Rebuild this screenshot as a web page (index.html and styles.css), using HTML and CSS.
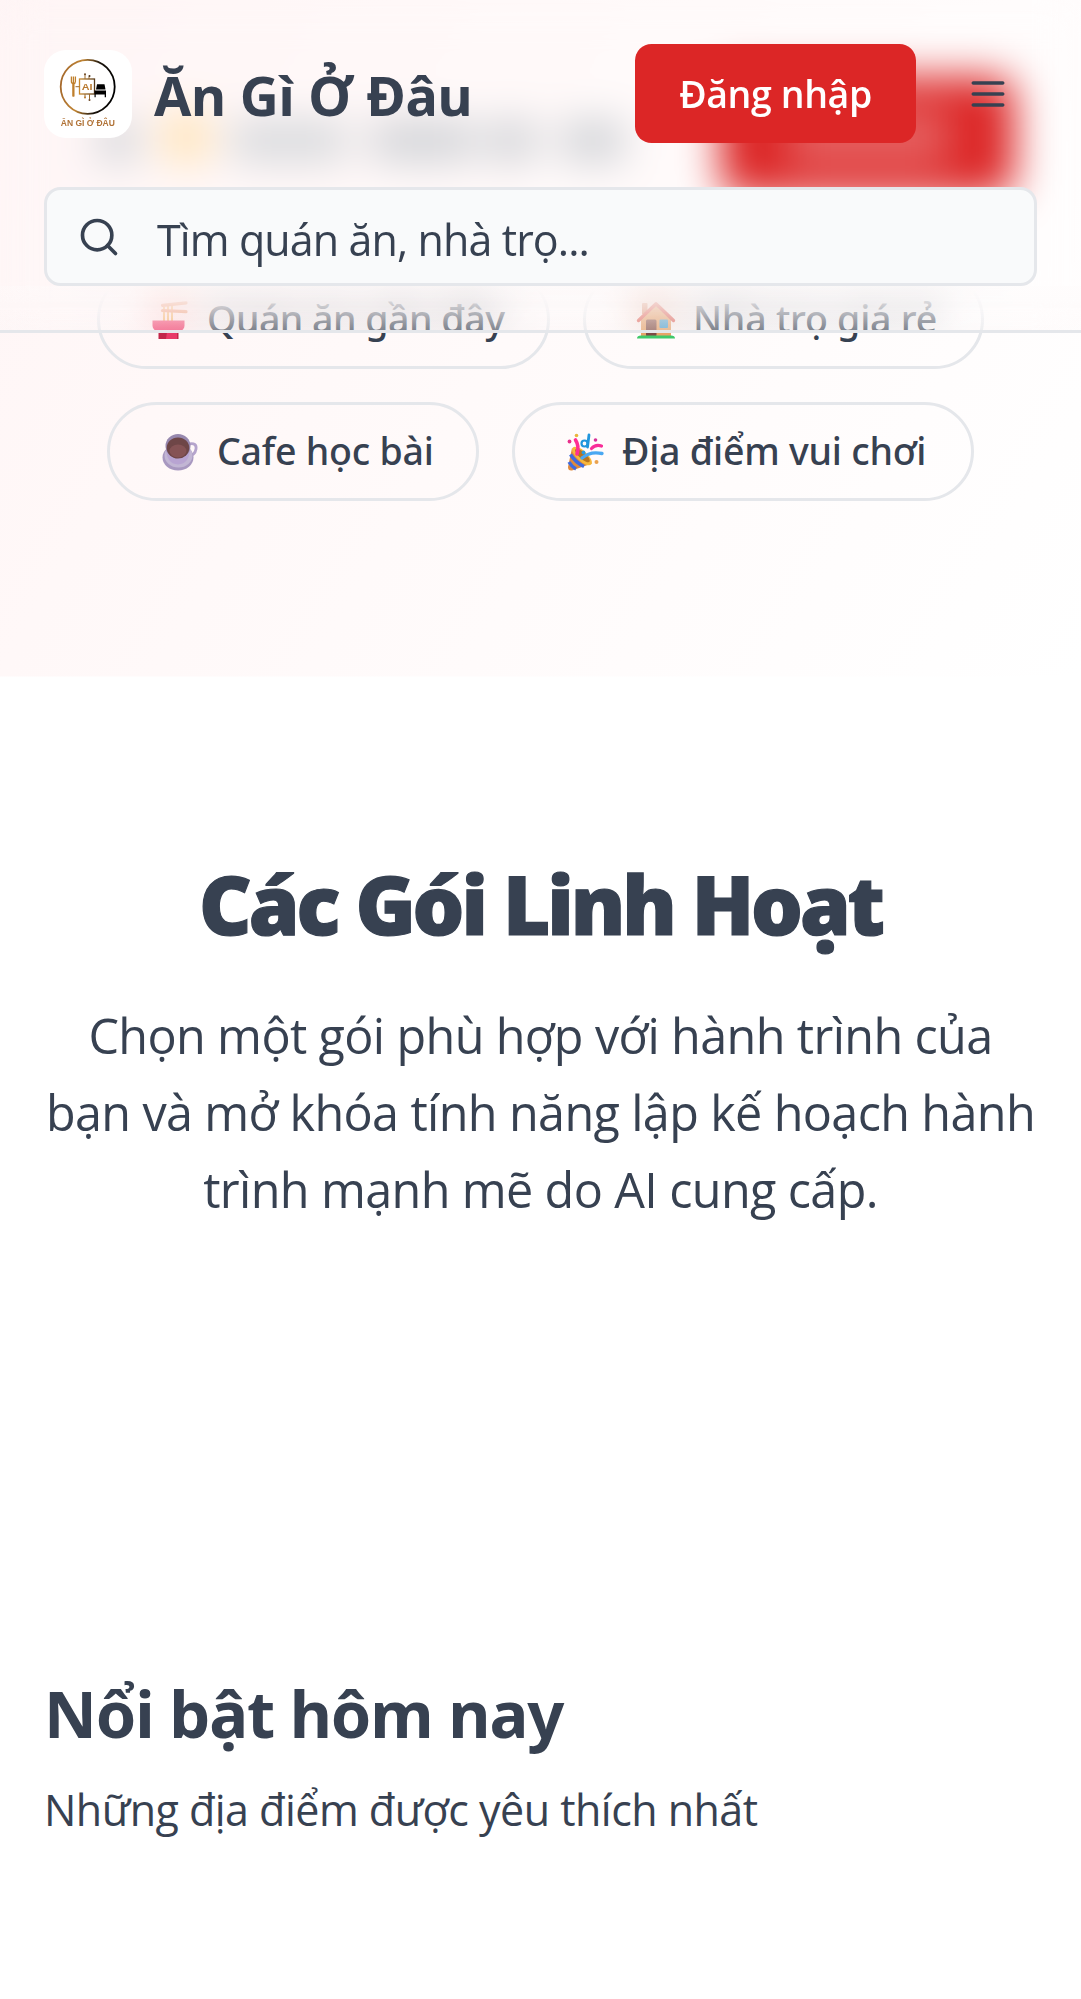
FILE: index.html
```html
<!DOCTYPE html>
<html lang="vi">
<head>
<meta charset="utf-8">
<title>Ăn Gì Ở Đâu</title>
<link rel="stylesheet" href="styles.css">
</head>
<body>
<header class="header">
  <div class="bar">
    <div class="logo">
      <svg viewBox="0 0 88 88" width="88" height="88">
        <defs>
          <linearGradient id="ring" x1="0" x2="1" y1="0.35" y2="0.5">
            <stop offset="0" stop-color="#a5692c"/><stop offset="0.35" stop-color="#c08433"/><stop offset="0.68" stop-color="#1a140c"/><stop offset="1" stop-color="#000"/>
          </linearGradient>
          <linearGradient id="chip" x1="0" x2="1"><stop offset="0" stop-color="#c98a2e"/><stop offset="1" stop-color="#5a3c1a"/></linearGradient>
        </defs>
        <circle cx="43.7" cy="36.8" r="27" fill="none" stroke="url(#ring)" stroke-width="1.8"/>
        <path d="M27.4 26.5v5q0 2 2 2.200q2-.2 2-2.200v-5M29.400 26.500v20" fill="none" stroke="#bf7f2c" stroke-width="1.300"/>
        <path d="M29.400 34v12.500" stroke="#bf7f2c" stroke-width="2.200"/>
        <rect x="35.500" y="29" width="15" height="15" fill="none" stroke="url(#chip)" stroke-width="1.300"/>
        <path d="M31.500 36.700h4M41 29v-4M45 29v-2.500M41 44v3M45.500 44v5" stroke="#9a6a30" stroke-width="1" fill="none"/>
        <circle cx="41" cy="24.300" r="1" fill="#6b4520"/><circle cx="45.500" cy="26" r="1" fill="#4a3018"/><circle cx="41" cy="47.500" r="1" fill="#b8782c"/><circle cx="45.500" cy="50" r="1" fill="#6b4520"/>
        <text x="37.800" y="40.100" class="logo-ai" textLength="10.800" lengthAdjust="spacingAndGlyphs">AI</text>
        <path d="M53 34.300h7.500l1 5.200h-9.500zM50.500 40.500h11.500v6.800h-1.300v-2.800h-9v2.800h-1.200z" fill="#000"/>
        <text x="16.800" y="76.300" class="logo-name" textLength="54" lengthAdjust="spacingAndGlyphs">ĂN GÌ Ở ĐÂU</text>
      </svg>
    </div>
    <span class="brand">Ăn Gì Ở Đâu</span>
    <button class="login">Đăng nhập</button>
    <button class="menu" aria-label="Menu">
      <svg viewBox="0 0 24 24" width="44" height="44" class="stroke-icon"><path d="M4 6h16M4 12h16M4 18h16"/></svg>
    </button>
  </div>
  <div class="search">
    <svg viewBox="0 0 24 24" width="44" height="44" class="stroke-icon"><circle cx="11" cy="11" r="8"/><path d="m21 21-4.350-4.350"/></svg>
    <span>Tìm quán ăn, nhà trọ...</span>
  </div>
</header>

<section class="hero">
  <div class="hero-search">
    <i class="word w1"></i><i class="word dish"></i><i class="word w2"></i><i class="word w3"></i><i class="word w4"></i><i class="word w5"></i>
    <div class="hero-btn"><i></i></div>
  </div>
  <div class="pills">
    <a class="pill p1">
      <svg viewBox="0 0 38 38" width="38" height="38">
        <path d="M13 6v18M17 5v18M21 5v16" stroke="#f0b040" stroke-width="1.700"/>
        <path d="M11.500 4.300 35 1.800M11.500 9.500l23.500 1.200" stroke="#e8905c" stroke-width="3.200" stroke-linecap="round"/>
        <path d="M1.500 19.500h32v5q0 4-5.500 7H7q-5.500-3-5.500-7z" fill="#f0386b"/>
        <path d="M7.500 31h20v7h-20z" fill="#c2264a"/><path d="M16 31h10v7H15z" fill="#e83a68"/>
      </svg>
      <span>Quán ăn gần đây</span>
    </a>
    <a class="pill p2">
      <svg viewBox="0 0 38 38" width="38" height="38">
        <path d="M5 3q0-1 1-1h3.500q1 0 1 1v10H5z" fill="#d98a6a"/>
        <path d="M4 18 19 4l15 14v18H4z" fill="#e8a468"/>
        <path d="M1.500 19.500 19 2.800l17.500 16.700" fill="none" stroke="#e0524a" stroke-width="3.300" stroke-linecap="round" stroke-linejoin="round"/>
        <rect x="9" y="18.500" width="10.500" height="17" rx="1.500" fill="#7c4a44"/>
        <rect x="22.500" y="18.500" width="8.500" height="8.500" rx="1" fill="#3ba4dc"/>
        <path d="M0 37.500q0-3 4-3h30q4 0 4 3z" fill="#3fc96a"/>
      </svg>
      <span>Nhà trọ giá rẻ</span>
    </a>
    <a class="pill p3">
      <svg viewBox="0 0 38 38" width="38" height="38">
        <path d="M28 11q8-1.500 7 5t-8 7" fill="none" stroke="#b5a4cc" stroke-width="2.800"/>
        <ellipse cx="17" cy="24.500" rx="15.500" ry="13" fill="#a898c0"/>
        <ellipse cx="17.500" cy="22.500" rx="14" ry="12" fill="#c2b6d4"/>
        <path d="M5 14q0 17 12 17.500 12-.5 12-17.500z" fill="#b8a4d2"/>
        <ellipse cx="17" cy="13" rx="12.500" ry="12" fill="#9788ae"/>
        <ellipse cx="17" cy="15" rx="11.300" ry="10.500" fill="#6e4647"/>
        <ellipse cx="17" cy="18" rx="8.500" ry="6.500" fill="#855355"/>
      </svg>
      <span>Cafe học bài</span>
    </a>
    <a class="pill p4">
      <svg viewBox="0 0 38 38" width="38" height="38">
        <path d="M6 15 2 34q0 4 4 3.500l20-7Q17 27 6 15z" fill="#e08a3c"/>
        <path d="M4.500 21.500q5 8 13.500 12M3 29q3 5 7 7" stroke="#3e6be0" stroke-width="3.400" fill="none"/>
        <ellipse cx="16" cy="23" rx="12.500" ry="5.200" transform="rotate(42 16 23)" fill="#f6b73c"/>
        <ellipse cx="16.500" cy="22.500" rx="9.500" ry="3.300" transform="rotate(42 16.500 22.500)" fill="#b8741f"/>
        <path d="M9.500 7q4 6 1.500 14" stroke="#ff2e93" stroke-width="3.600" fill="none" stroke-linecap="round"/>
        <path d="M16 25q8-7 20-4.500" stroke="#4aa8f2" stroke-width="3.400" fill="none" stroke-linecap="round"/>
        <path d="M25.500 15.500q4-4.500 10-2.500" stroke="#f92c98" stroke-width="3.200" fill="none" stroke-linecap="round"/>
        <path d="M23 2 21.500 14" stroke="#2196dc" stroke-width="2.800" stroke-linecap="round"/><circle cx="18.500" cy="10.500" r="3" fill="none" stroke="#2196dc" stroke-width="2.200"/>
        <circle cx="10.500" cy="2.500" r="1.800" fill="#eab43c"/><circle cx="3.500" cy="8.500" r="1.900" fill="#e8308c"/><circle cx="29.500" cy="7" r="1.800" fill="#d6309a"/><circle cx="30.500" cy="29" r="2" fill="#eba24e"/><circle cx="17.500" cy="19.500" r="1.900" fill="#2a9be0"/>
      </svg>
      <span>Địa điểm vui chơi</span>
    </a>
  </div>
</section>

<section class="plans">
  <h2>Các Gói Linh Hoạt</h2>
  <p>Chọn một gói phù hợp với hành trình của<br>bạn và mở khóa tính năng lập kế hoạch hành<br>trình mạnh mẽ do AI cung cấp.</p>
</section>

<section class="featured">
  <h3>Nổi bật hôm nay</h3>
  <p>Những địa điểm được yêu thích nhất</p>
</section>
</body>
</html>
```

FILE: styles.css
```css
* { box-sizing: border-box; }
html, body { margin: 0; height: 1999px; overflow: hidden; }
body {
  width: 1081px;
  background: #fff;
  color: #374151;
  font-family: "Open Sans", "Noto Sans", sans-serif;
}
h2, h3, p { margin: 0; }
svg { display: block; flex: none; overflow: visible; }

/* Header floats over the scrolled content */
.header {
  position: fixed;
  inset: 0 0 auto 0;
  z-index: 10;
  height: 333px;
  padding: 44px 44px 0;
  border-bottom: 3px solid #e5e7eb;
}
.header::before {
  content: "";
  position: absolute;
  inset: 0;
  z-index: -1;
  -webkit-backdrop-filter: blur(20px);
  backdrop-filter: blur(20px);
  -webkit-mask-image: linear-gradient(#000 290px, rgba(0, 0, 0, .52) 330px);
  mask-image: linear-gradient(#000 290px, rgba(0, 0, 0, .52) 330px);
}
/* Light veil, strongest just under the search field */
.header::after {
  content: "";
  position: absolute;
  inset: 286px 0 0;
  z-index: -1;
  background: linear-gradient(rgba(253, 250, 250, .4), rgba(253, 250, 250, .22));
}
.bar { display: flex; align-items: center; height: 99px; }
.logo { width: 88px; height: 88px; border-radius: 22px; background: #fff; }
.logo-ai { font: 700 8.800px "Liberation Sans", sans-serif; fill: #b9792e; }
.logo-name { font: 700 9.800px "Liberation Sans", sans-serif; fill: #b07236; }
.brand {
  margin-left: 22px;
  padding-top: 3px;
  font: 700 54px/66px "Noto Sans", sans-serif;
  letter-spacing: -.250px;
  white-space: nowrap;
}
button { border: 0; padding: 0; margin: 0; background: none; color: inherit; }
.login {
  width: 281px;
  height: 99px;
  margin-left: auto;
  border-radius: 16.500px;
  background: #dc2626;
  color: #fff;
  font: 600 37.500px/55px "Open Sans", sans-serif;
  letter-spacing: -.4px;
  white-space: nowrap;
}
.menu { display: grid; place-items: center; width: 99px; height: 99px; margin-left: 22px; }
.stroke-icon { fill: none; stroke: #374151; stroke-width: 2; stroke-linecap: round; stroke-linejoin: round; }
.search {
  display: flex;
  align-items: center;
  gap: 36px;
  height: 99px;
  margin-top: 44px;
  padding: 0 30px;
  border: 3px solid #e5e7eb;
  border-radius: 16.500px;
  background: #f9fafb;
}
.search span { padding-top: 7px; font-size: 43px; line-height: 60px; letter-spacing: -.900px; }

.hero {
  height: 676.500px;
  padding-top: 76px;
  overflow: hidden;
  background: linear-gradient(to bottom right, #fef0f1, #fff8f8 50%, #fff) 0 100% / 100% 1848px no-repeat;
}
.hero-search { display: flex; align-items: center; height: 121px; padding: 0 66px 0 99px; }
.word { flex: none; height: 42px; margin-top: 8px; border-radius: 8px; background: #d2d4d8; }
.w1 { width: 38px; }
.dish { width: 46px; height: 50px; margin: 0 22px 0 26px; background: #ffe4b8; }
.w2 { width: 116px; background: #d8dadd; }
.w3 { width: 104px; margin-left: 24px; }
.w4 { width: 50px; margin-left: 12px; }
.w5 { width: 64px; margin-left: 24px; }
.hero-btn { display: grid; place-items: center; width: 295px; height: 121px; margin-left: auto; border-radius: 22px; background: #dc2626; }
.hero-btn i { width: 160px; height: 60px; background: rgba(255, 255, 255, .27); }

.pills { display: flex; flex-wrap: wrap; justify-content: center; gap: 33px; padding: 73px 88px 0; }
.pill {
  display: flex;
  align-items: center;
  gap: 18px;
  height: 99px;
  padding-left: 51px;
  border: 3px solid #e5e7eb;
  border-radius: 50px;
  font: 500 37.500px/55px "Noto Sans", sans-serif;
  letter-spacing: -.230px;
  white-space: nowrap;
}
.pill span { padding-bottom: 2px; }
.p1 { width: 453px; letter-spacing: -.500px; }
.p2 { width: 401px; }
.p3 { width: 372px; }
.p4 { width: 462px; }

.plans { padding-top: 177px; text-align: center; white-space: nowrap; }
.plans h2 { font-size: 81.500px; line-height: 99px; font-weight: 800; letter-spacing: -3.100px; -webkit-text-stroke: 1.200px #374151; }
.plans p { margin-top: 44px; font-size: 48.500px; line-height: 77px; letter-spacing: -.620px; }

.featured { padding: 441px 44px 0; }
.featured h3 { font: 700 65px/88px "Noto Sans", sans-serif; letter-spacing: -1.150px; }
.featured p { margin-top: 20.500px; font-size: 43px; line-height: 66px; letter-spacing: -.530px; }
```
